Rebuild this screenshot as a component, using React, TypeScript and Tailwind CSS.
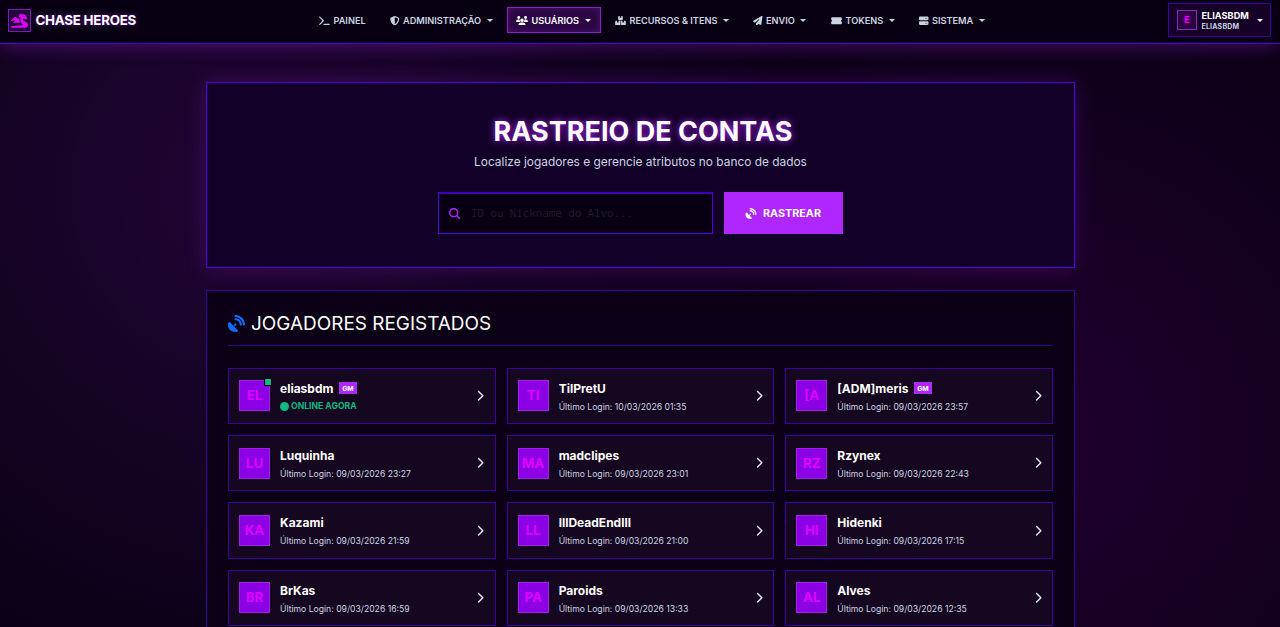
import type { IconType } from "react-icons";
import {
  FaBoxesStacked,
  FaChevronRight,
  FaCircle,
  FaDragon,
  FaMagnifyingGlass,
  FaPaperPlane,
  FaSatelliteDish,
  FaServer,
  FaShieldHalved,
  FaTerminal,
  FaTicketSimple,
  FaUsers,
} from "react-icons/fa6";

interface NavItem {
  label: string;
  icon: IconType;
  iconWidth: string;
  width: string;
  menu?: boolean;
  active?: boolean;
}

interface Player {
  name: string;
  login?: string;
  gm?: boolean;
}

const NAV: NavItem[] = [
  { label: "PAINEL", icon: FaTerminal, iconWidth: "w-[11px]", width: "w-[66px]" },
  { label: "ADMINISTRAÇÃO", icon: FaShieldHalved, iconWidth: "w-[9.5px]", width: "w-[121px]", menu: true },
  { label: "USUÁRIOS", icon: FaUsers, iconWidth: "w-[12px]", width: "w-[94px]", menu: true, active: true },
  { label: "RECURSOS & ITENS", icon: FaBoxesStacked, iconWidth: "w-[11px]", width: "w-[133px]", menu: true },
  { label: "ENVIO", icon: FaPaperPlane, iconWidth: "w-[9.5px]", width: "w-[73px]", menu: true },
  { label: "TOKENS", icon: FaTicketSimple, iconWidth: "w-[11px]", width: "w-[83px]", menu: true },
  { label: "SISTEMA", icon: FaServer, iconWidth: "w-[9.5px]", width: "w-[86px]", menu: true },
];

const PLAYERS: Player[] = [
  { name: "eliasbdm", gm: true },
  { name: "TilPretU", login: "10/03/2026 01:35" },
  { name: "[ADM]meris", login: "09/03/2026 23:57", gm: true },
  { name: "Luquinha", login: "09/03/2026 23:27" },
  { name: "madclipes", login: "09/03/2026 23:01" },
  { name: "Rzynex", login: "09/03/2026 22:43" },
  { name: "Kazami", login: "09/03/2026 21:59" },
  { name: "lllDeadEndlll", login: "09/03/2026 21:00" },
  { name: "Hidenki", login: "09/03/2026 17:15" },
  { name: "BrKas", login: "09/03/2026 16:59" },
  { name: "Paroids", login: "09/03/2026 13:33" },
  { name: "Alves", login: "09/03/2026 12:35" },
];

function Caret() {
  return <span className="border-x-[3px] border-t-[3px] border-x-transparent border-t-current" />;
}

function Navbar() {
  return (
    <header className="relative z-10 flex h-11 shrink-0 items-start border-b border-[#4c00dc] bg-[#080012] shadow-[0_0_20px_rgba(176,38,255,0.4)]">
      <div className="flex h-[41px] w-[310px] items-center gap-[4.5px] pl-2">
        <div className="flex h-[23px] w-[23px] items-center justify-center border border-[#7a1bb5] bg-[#25063c]">
          <FaDragon className="h-[14px] w-[17px] text-[#df00ff]" />
        </div>
        <span className="text-[13.3px] font-bold tracking-[-0.22px] text-white [text-shadow:0_0_5px_rgba(176,38,255,0.6)]">CHASE HEROES</span>
      </div>
      <nav className="flex h-10 items-center">
        {NAV.map((item) => (
          <div
            key={item.label}
            className={`mr-[5px] flex h-[26px] items-center whitespace-nowrap border pl-[8px] pt-px text-[9.2px] font-semibold ${item.width} ${
              item.active
                ? "mr-[5.5px] border-[#8a1fc8] bg-[#2b0843] text-white shadow-[inset_0_0_7px_rgba(176,38,255,0.25)]"
                : "border-transparent text-[#cbd5e1]"
            }`}
          >
            <item.icon className={`mr-[3.5px] h-[9.5px] shrink-0 ${item.iconWidth}`} />
            <span>{item.label}</span>
            {item.menu && <span className="ml-[5.5px] flex"><Caret /></span>}
          </div>
        ))}
      </nav>
      <div className="ml-auto mr-[9px] mt-[3px] flex h-[34px] w-[103px] items-center border border-[#3b009f] bg-[#150028] pl-2 text-white">
        <div className="flex h-[20px] w-[20px] shrink-0 items-center justify-center border border-[#8a1fc8] bg-[#29053e] text-[9px] font-bold text-[#df00ff] [text-shadow:0_0_4px_#df00ff]">E</div>
        <div className="ml-[4.5px] w-[55.5px] pt-px font-bold">
          <div className="text-[9.2px] leading-[12px]">ELIASBDM</div>
          <div className="text-[7px] leading-[10px] tracking-[0.2px] text-[#cbd5e1]">ELIASBDM</div>
        </div>
        <Caret />
      </div>
    </header>
  );
}

function SearchPanel() {
  return (
    <section className="flex h-[186px] flex-col items-center border border-[#4c00e4] bg-[#130028] pt-[31px] shadow-[0_0_20px_rgba(176,38,255,0.22)]">
      <h1 className="pl-[5px] text-[27px] font-bold leading-[36px] text-white [text-shadow:0_0_7px_#b026ff]">RASTREIO DE CONTAS</h1>
      <p className="mt-[2px] text-[11.9px] leading-[20px] text-[#cbd5e1]">Localize jogadores e gerencie atributos no banco de dados</p>
      <div className="mt-[20px] flex gap-[11px]">
        <div className="flex h-[42px] w-[275px] items-center border border-t-2 border-[#4c00e4] border-t-[#4000b8] bg-[#080012] pl-[9.5px]">
          <FaMagnifyingGlass className="h-[11.5px] w-[11.5px] text-[#b026ff]" />
          <input
            placeholder="ID ou Nickname do Alvo..."
            className="ml-[11px] min-w-0 flex-1 bg-transparent font-['Noto_Sans_Mono','DejaVu_Sans_Mono',monospace] text-[10.8px] text-white outline-none placeholder:text-[#211b29]"
          />
        </div>
        <button className="flex h-[42px] w-[119px] items-center justify-center gap-[6px] bg-[#b026ff] pr-px pt-px text-[10.8px] font-bold text-white">
          <FaSatelliteDish className="h-[11px] w-[12px]" />
          <span className="pt-px">RASTREAR</span>
        </button>
      </div>
    </section>
  );
}

function PlayerCard({ player }: { player: Player }) {
  return (
    <div className="flex h-[56.5px] items-center border border-[#3a00a0] bg-[#160720] pl-[10px] pr-[10.5px]">
      <div className="relative flex h-[31px] w-[31px] items-center justify-center border border-[#a020e8] bg-[#8b00e5] pt-px text-[13.3px] font-bold text-[#df00ff]">
        {player.name.slice(0, 2).toUpperCase()}
        {!player.login && <span className="absolute -right-[3px] -top-[3px] h-[8px] w-[8px] border border-[#080012] bg-[#10b981]" />}
      </div>
      <div className="ml-[10px] flex-1 pt-[1.5px]">
        <div className="flex h-[18px] items-center gap-[5.5px] text-[12px] font-bold text-white">
          {player.name}
          {player.gm && <span className="-mt-px flex h-[12px] w-[18px] items-center justify-center bg-[#b026ff] pt-px text-[6.8px]">GM</span>}
        </div>
        {player.login ? (
          <div className="mt-[2px] h-[14px] text-[8.65px] leading-[14px] text-[#cbd5e1]">Último Login: {player.login}</div>
        ) : (
          <div className="mt-[2px] flex h-[14px] items-center gap-[2px] text-[8.65px] font-bold text-[#10b981]">
            <FaCircle className="h-[9px] w-[9px]" />
            ONLINE AGORA
          </div>
        )}
      </div>
      <FaChevronRight className="h-[11.5px] w-[8px] text-[#e2e8f0]" />
    </div>
  );
}

export default function App() {
  return (
    <div className="flex h-[627px] flex-col overflow-hidden bg-[#080012] bg-[radial-gradient(circle_at_20%_30%,rgba(176,38,255,0.15),transparent_50%),radial-gradient(circle_at_80%_70%,rgba(176,0,220,0.14),transparent_50%)] font-[Inter,sans-serif]">
      <Navbar />
      <main className="ml-[206px] mt-[38px] w-[869px] shrink-0">
        <SearchPanel />
        <section className="mt-[21.5px] border border-[#3a00a0] bg-[#0b0016] px-[21px] pb-6 pt-[17px]">
          <div className="flex h-[38.5px] items-start border-b border-[#33008c]">
            <h2 className="flex items-center gap-[6px] text-[18.95px] leading-[32px] text-white">
              <FaSatelliteDish className="h-[17px] w-[17px] text-[#0d6efd]" />
              JOGADORES REGISTADOS
            </h2>
          </div>
          <div className="mt-[21.7px] grid grid-cols-3 gap-x-[10.9px] gap-y-[10.8px]">
            {PLAYERS.map((p) => (
              <PlayerCard key={p.name} player={p} />
            ))}
          </div>
        </section>
      </main>
    </div>
  );
}
